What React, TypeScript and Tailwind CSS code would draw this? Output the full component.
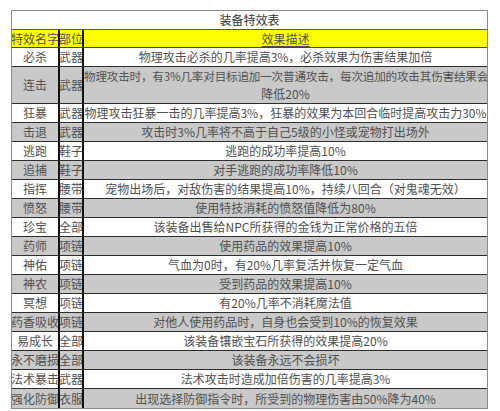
import React from "react";

type Row = {
  name: string;
  part: string;
  desc: React.ReactNode;
  tall?: boolean;
};

const rows: Row[] = [
  { name: "必杀", part: "武器", desc: "物理攻击必杀的几率提高3%，必杀效果为伤害结果加倍" },
  {
    name: "连击",
    part: "武器",
    desc: (
      <>
        <span className="block whitespace-nowrap text-[11.6px] tracking-[-0.2px]">
          物理攻击时，有3%几率对目标追加一次普通攻击，每次追加的攻击其伤害结果会
        </span>
        <span className="block">降低20%</span>
      </>
    ),
    tall: true,
  },
  { name: "狂暴", part: "武器", desc: "物理攻击狂暴一击的几率提高3%，狂暴的效果为本回合临时提高攻击力30%" },
  { name: "击退", part: "武器", desc: "攻击时3%几率将不高于自己5级的小怪或宠物打出场外" },
  { name: "逃跑", part: "鞋子", desc: "逃跑的成功率提高10%" },
  { name: "追捕", part: "鞋子", desc: "对手逃跑的成功率降低10%" },
  { name: "指挥", part: "腰带", desc: "宠物出场后，对敌伤害的结果提高10%，持续八回合（对鬼魂无效）" },
  { name: "愤怒", part: "腰带", desc: "使用特技消耗的愤怒值降低为80%" },
  { name: "珍宝", part: "全部", desc: "该装备出售给NPC所获得的金钱为正常价格的五倍" },
  { name: "药师", part: "项链", desc: "使用药品的效果提高10%" },
  { name: "神佑", part: "项链", desc: "气血为0时，有20%几率复活并恢复一定气血" },
  { name: "神农", part: "项链", desc: "受到药品的效果提高10%" },
  { name: "冥想", part: "项链", desc: "有20%几率不消耗魔法值" },
  { name: "药香吸收", part: "项链", desc: "对他人使用药品时，自身也会受到10%的恢复效果" },
  { name: "易成长", part: "全部", desc: "该装备镶嵌宝石所获得的效果提高20%" },
  { name: "永不磨损", part: "全部", desc: "该装备永远不会损坏" },
  { name: "法术暴击", part: "武器", desc: "法术攻击时造成加倍伤害的几率提高3%" },
  { name: "强化防御", part: "衣服", desc: "出现选择防御指令时，所受到的物理伤害由50%降为40%" },
];

const font = { fontFamily: '"Noto Sans CJK SC", "Liberation Sans", sans-serif' };

export default function App() {
  return (
    <div className="w-[500px] h-[411px] bg-white pt-[10px] pl-[11px]" style={font}>
      <div className="w-[477px] border border-[#8a8a8a] text-[12px] text-[#505050]">
        <div className="h-[19px] border-b border-[#555] flex items-center justify-center leading-none text-[#333]">
          装备特效表
        </div>
        <div className="h-[18px] bg-[#ffff00] border-b border-[#444] flex leading-none">
          <div className="w-[48px] shrink-0 flex items-center justify-center overflow-hidden whitespace-nowrap border-r-2 border-[#111]">
            特效名字
          </div>
          <div className="w-[24px] shrink-0 flex items-center justify-center overflow-hidden whitespace-nowrap border-r-2 border-[#111]">
            部位
          </div>
          <div className="flex-1 flex items-center justify-center">
            <span className="underline underline-offset-2">效果描述</span>
          </div>
        </div>
        {rows.map((r, i) => (
          <div
            key={r.name}
            className={`flex border-b border-[#2e2e2e] ${r.tall ? "h-[37px]" : "h-[19px]"} ${
              i % 2 === 1 ? "bg-[#c9c9c9]" : "bg-white"
            } ${i === rows.length - 1 ? "border-b-0" : ""}`}
          >
            <div className="w-[48px] shrink-0 flex items-center justify-center overflow-hidden whitespace-nowrap border-r-2 border-[#111]">
              {r.name}
            </div>
            <div className="w-[24px] shrink-0 flex items-center justify-center overflow-hidden whitespace-nowrap border-r-2 border-[#111]">
              {r.part}
            </div>
            <div
              className={`flex-1 min-w-0 overflow-hidden text-center ${
                r.tall ? "leading-[17px] pt-[1px]" : "flex items-center justify-center whitespace-nowrap"
              }`}
            >
              {r.desc}
            </div>
          </div>
        ))}
      </div>
    </div>
  );
}
